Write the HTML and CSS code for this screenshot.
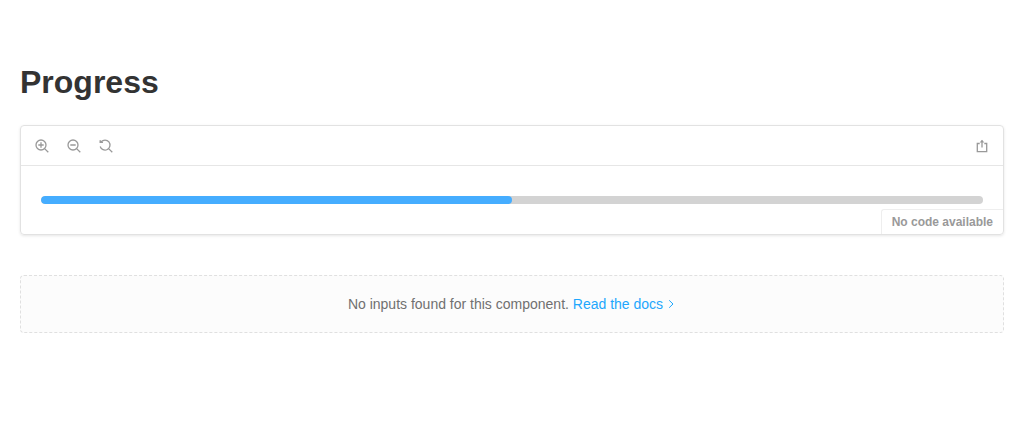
FILE: index.html
```html
<!DOCTYPE html>
<html lang="en">
<head>
<meta charset="utf-8">
<title>Progress</title>
<link rel="stylesheet" href="styles.css">
</head>
<body>
<main class="page">
  <h1 class="title">Progress</h1>
  <section class="preview">
    <div class="toolbar">
      <div class="tools">
        <svg class="icon" viewBox="0 0 14 14"><path d="M6 3.3v5.400M3.300 6h5.400M9.600 9.600l3.700 3.700"/><circle cx="6" cy="6" r="5"/></svg>
        <svg class="icon" viewBox="0 0 14 14"><path d="M3.300 6h5.400M9.600 9.600l3.700 3.700"/><circle cx="6" cy="6" r="5"/></svg>
        <svg class="icon" viewBox="0 0 14 14"><path d="M2.200 2.800A5 5 0 1 1 1.200 7.500M9.600 9.600l3.700 3.700"/><path class="solid" d="M.5 1.300h1.200l2.300 2v.8H.5z"/></svg>
      </div>
      <svg class="icon" viewBox="0 0 14 14"><path d="M4.700 4.500H2.300v8.100h9.400V4.500H9.300M7 8.400V1.500"/><path class="solid" d="M4.700 3.500 7 .7l2.300 2.800z"/></svg>
    </div>
    <div class="stage">
      <div class="track"><div class="fill"></div></div>
      <div class="code">No code available</div>
    </div>
  </section>
  <section class="empty">No inputs found for this component.&nbsp;<a class="docs">Read the docs</a><svg class="chevron" viewBox="0 0 10 10"><path d="M3.200 1.300 7 5 3.200 8.700"/></svg></section>
</main>
</body>
</html>
```
FILE: styles.css
```css
* { box-sizing: border-box; }
body { margin: 0; background: #fff; color: #333; font: 14px/20px "Liberation Sans", Arial, sans-serif; }
.page { padding: 62px 20px 0; }
.title { margin: 0 0 23px; font-size: 32px; line-height: 40px; }
.preview { height: 110px; border: 1px solid #e2e2e2; border-radius: 4px; box-shadow: 0 1px 3px rgba(0,0,0,.1); }
.toolbar { display: flex; justify-content: space-between; align-items: center; height: 40px; padding: 0 14px; border-bottom: 1px solid #e6e6e6; }
.tools { display: flex; gap: 18px; }
.icon { width: 14px; height: 14px; fill: none; stroke: #999; stroke-width: 1.3; }
.solid { fill: #999; stroke: none; }
.stage { position: relative; height: 68px; padding: 30px 20px; }
.track { height: 8px; border-radius: 4px; background: #d3d3d3; overflow: hidden; }
.fill { width: 50%; height: 8px; border-radius: 4px; background: #45adff; }
.code { position: absolute; right: 0; bottom: 0; padding: 5px 10px; border: 1px solid #eee; border-width: 1px 0 0 1px; border-top-left-radius: 3px; font-size: 12px; line-height: 14px; font-weight: bold; color: #999; }
.empty { display: flex; align-items: center; justify-content: center; height: 58px; margin-top: 40px; border: 1px dashed #e0e0e0; border-radius: 4px; background: #fcfcfc; color: #707070; }
.docs { color: #1ea7fd; }
.chevron { width: 10px; height: 10px; margin-left: 3px; fill: none; stroke: #1ea7fd; }
```
